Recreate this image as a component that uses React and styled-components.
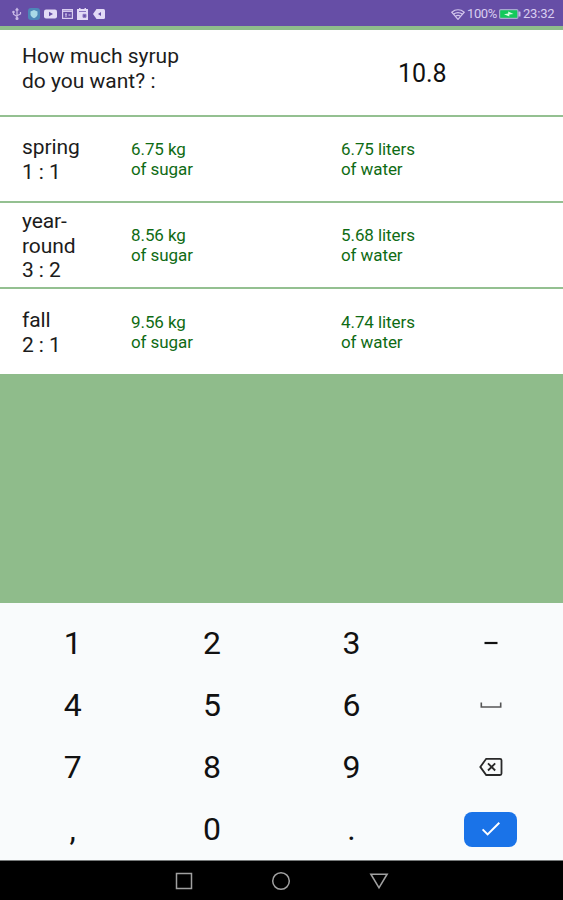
import React from "react";
import styled, { createGlobalStyle } from "styled-components";

const Global = createGlobalStyle`
  * { box-sizing: border-box; }
  body { margin: 0; font-family: Roboto, "Liberation Sans", sans-serif; }
`;

const Screen = styled.div`
  display: flex;
  flex-direction: column;
  width: 563px;
  height: 900px;
  background: #8fbc8b;
  overflow: hidden;
`;

const StatusBar = styled.header`
  display: flex;
  align-items: center;
  justify-content: space-between;
  height: 26px;
  flex: none;
  padding: 2px 8px 0 11px;
  background: #664ea6;
  color: #d9cdf0;
`;

const StatusGroup = styled.div`
  display: flex;
  align-items: center;
  gap: ${(p) => p.$gap || 0}px;
  svg { display: block; }
`;

const StatusText = styled.span`
  font-size: 13px;
  line-height: 16px;
  width: ${(p) => p.$width}px;
  letter-spacing: ${(p) => p.$spacing || 0}px;
  white-space: nowrap;
`;

const Table = styled.main`
  display: grid;
  grid-template-rows: 85px 84px 84px 85px;
  gap: 2px;
  margin-top: 4px;
  height: 344px;
  flex: none;
  background: #94c091;
`;

const Row = styled.section`
  display: grid;
  grid-template-columns: ${(p) => p.$columns};
  align-items: center;
  padding-left: 22px;
  background: #fff;
`;

const Label = styled.div`
  font-size: 21px;
  line-height: 24.6px;
  color: #1c1c1c;
  white-space: pre-line;
  letter-spacing: ${(p) => p.$spacing || 0}px;
  position: relative;
  margin-top: ${(p) => p.$shift || 0}px;
`;

const Amount = styled.div`
  font-size: 25px;
  line-height: 28px;
  letter-spacing: -0.1px;
  color: #111;
  margin-top: 3px;
`;

const Result = styled.div`
  font-size: 17px;
  line-height: 20px;
  letter-spacing: -0.08px;
  color: #0f6b14;
  white-space: pre-line;
`;

const Keypad = styled.div`
  display: grid;
  grid-template-columns: repeat(4, 139.4px);
  grid-template-rows: repeat(4, 62px);
  height: 258px;
  flex: none;
  margin-top: auto;
  padding: 9px 0 0 3px;
  background: #f9fbfc;
  border-bottom: 1px solid #777a7a;
`;

const Key = styled.button`
  display: flex;
  align-items: center;
  justify-content: center;
  border: 0;
  padding: 0;
  background: none;
  color: #111;
  font: 400 32px/38px Roboto, "Liberation Sans", sans-serif;
`;

const Confirm = styled.span`
  display: flex;
  align-items: center;
  justify-content: center;
  width: 53px;
  height: 35px;
  border-radius: 8px;
  background: #1a73e8;
`;

const NavBar = styled.nav`
  display: flex;
  align-items: center;
  justify-content: center;
  gap: 78px;
  height: 39px;
  flex: none;
  padding: 1px 0 0 1px;
  background: #000;
`;

const UsbIcon = () => (
  <svg width="12" height="14" viewBox="0 0 12 14" fill="none" stroke="#c9b9e6" strokeWidth="1.2">
    <path d="M6 12V2M4.6 3.4 6 1.5l1.4 1.9M2.5 5v2.2L6 9.5M9.5 5v2L6 8.8" />
    <circle cx="6" cy="11.5" r="1" fill="#c9b9e6" />
    <circle cx="2.5" cy="5" r=".7" />
  </svg>
);
const ShieldIcon = () => (
  <svg width="12" height="12" viewBox="0 0 12 12">
    <rect width="12" height="12" rx="3" fill="#4d86b8" />
    <path d="M6 2 9.5 3.4v2.8C9.5 8 8 9.3 6 10.2 4 9.3 2.5 8 2.5 6.2V3.4Z" fill="#a8d9e6" />
  </svg>
);
const VideoIcon = () => (
  <svg width="13" height="10" viewBox="0 0 13 10">
    <rect y=".5" width="13" height="9" rx="2" fill="#e3daf6" />
    <path d="M5 2.7v4.6L9 5Z" fill="#664ea6" />
  </svg>
);
const WindowIcon = () => (
  <svg width="11" height="10" viewBox="0 0 11 10" fill="none" stroke="#d9cdf0">
    <rect x=".6" y=".6" width="9.8" height="8.8" strokeWidth="1.2" />
    <path d="M1 2.2h9" strokeWidth="1.5" />
    <path d="M3 5.2h2M3 7h2M6.5 6h2" strokeWidth="1.2" />
  </svg>
);
const CalendarIcon = () => (
  <svg width="11" height="12" viewBox="0 0 11 12">
    <path d="M0 1h2V0h1.5v1h4V0H9v1h2v11H0Z" fill="#e3daf6" />
    <path d="M2 3.5h7M6 6.3h3v3H6z" stroke="#8b76c2" fill="#664ea6" />
  </svg>
);
const TagIcon = () => (
  <svg width="12" height="10" viewBox="0 0 12 10">
    <path d="M3.5 0H10.5Q12 0 12 1.5v7Q12 10 10.5 10h-7L0 5Z" fill="#e3daf6" />
    <path d="M8 3 5 5l3 2Z" fill="#664ea6" />
  </svg>
);
const WifiIcon = () => (
  <svg width="14" height="11" viewBox="0 0 14 11" fill="none" stroke="#d2c5ec" strokeWidth="1.2">
    <path d="M.8 3.2C4.5.2 9.5.2 13.2 3.2L7 10.4Z" />
    <path d="M2.7 5.1c2.8-2 5.8-2 8.6 0M4.5 7.2c1.7-1.1 3.3-1.1 5 0" />
  </svg>
);
const BatteryIcon = () => (
  <svg width="22" height="10" viewBox="0 0 22 10">
    <rect x=".6" y=".6" width="18.3" height="8.8" rx="1.2" fill="#12c95b" stroke="#a7a9cf" strokeWidth="1.2" />
    <rect x="19.5" y="2.5" width="2" height="5" rx=".6" fill="#c9b9e6" />
    <path d="m5 5.2 4.2-.7V2.5L14.5 5l-4.2.6v2Z" fill="#d4ffe2" />
  </svg>
);
const MinusIcon = () => (
  <svg width="14" height="4" viewBox="0 0 14 4"><path d="M.5 2h13" stroke="#111" strokeWidth="2.2" /></svg>
);
const SpaceIcon = () => (
  <svg width="22" height="8" viewBox="0 0 22 8" fill="none" stroke="#555" strokeWidth="1.6">
    <path d="M1.3 1.5V6h19.4V1.5" />
  </svg>
);
const BackspaceIcon = () => (
  <svg width="24" height="20" viewBox="0 0 24 20" fill="none" stroke="#292929" strokeWidth="1.8">
    <path d="M7.2 1.8H21Q22.5 1.8 22.5 3.3v13.2Q22.5 18 21 18H7.2L1.3 9.9Z" />
    <path d="m9 6.3 7.2 7.2m0-7.2L9 13.5" />
  </svg>
);
const CheckIcon = () => (
  <svg width="20" height="16" viewBox="0 0 20 16" fill="none" stroke="#fff" strokeWidth="2">
    <path d="m1.6 8.4 5 5L18.3 1.8" />
  </svg>
);
const RecentIcon = () => (
  <svg width="18" height="18" viewBox="0 0 18 18"><rect x="1.5" y="1.5" width="15" height="15" fill="none" stroke="#a0a0a0" strokeWidth="1.5" /></svg>
);
const HomeIcon = () => (
  <svg width="20" height="20" viewBox="0 0 20 20"><circle cx="10" cy="10" r="8.3" fill="none" stroke="#a0a0a0" strokeWidth="1.5" /></svg>
);
const BackIcon = () => (
  <svg width="20" height="18" viewBox="0 0 20 18"><path d="M1.9 2.2h16.2L10 15.8Z" fill="none" stroke="#a0a0a0" strokeWidth="1.6" /></svg>
);

const RECIPES = [
  { label: "spring\n1 : 1", sugar: "6.75", water: "6.75" },
  { label: "year-\nround\n3 : 2", sugar: "8.56", water: "5.68" },
  { label: "fall\n2 : 1", sugar: "9.56", water: "4.74" },
];

const KEYS = [
  "1", "2", "3", <MinusIcon />,
  "4", "5", "6", <SpaceIcon />,
  "7", "8", "9", <BackspaceIcon />,
  ",", "0", ".", <Confirm><CheckIcon /></Confirm>,
];

export default function App() {
  return (
    <Screen>
      <Global />
      <StatusBar>
        <StatusGroup $gap={4.5}>
          <UsbIcon />
          <ShieldIcon />
          <VideoIcon />
          <WindowIcon />
          <CalendarIcon />
          <TagIcon />
        </StatusGroup>
        <StatusGroup $gap={2}>
          <WifiIcon />
          <StatusText $width={30} $spacing={-0.4}>100%</StatusText>
          <BatteryIcon />
          <StatusText $width={32} $spacing={-0.2}>23:32</StatusText>
        </StatusGroup>
      </StatusBar>
      <Table>
        <Row $columns="376px 1fr">
          <Label $shift={-7}>{"How much syrup\ndo you want? :"}</Label>
          <Amount>10.8</Amount>
        </Row>
        {RECIPES.map((r) => (
          <Row key={r.label} $columns="109px 210px 1fr">
            <Label $shift={2} $spacing={-0.1}>{r.label}</Label>
            <Result>{`${r.sugar} kg\nof sugar`}</Result>
            <Result>{`${r.water} liters\nof water`}</Result>
          </Row>
        ))}
      </Table>
      <Keypad>
        {KEYS.map((k, i) => (
          <Key key={i}>{k}</Key>
        ))}
      </Keypad>
      <NavBar>
        <RecentIcon />
        <HomeIcon />
        <BackIcon />
      </NavBar>
    </Screen>
  );
}
